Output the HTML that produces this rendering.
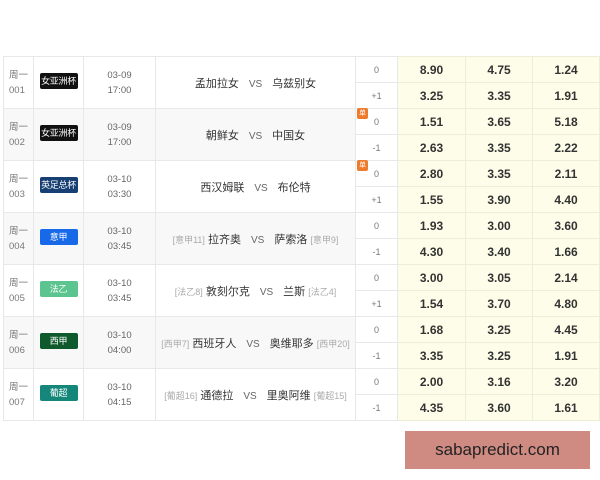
<!DOCTYPE html>
<html><head><meta charset="utf-8"><style>
body{margin:0;width:600px;height:480px;background:#fff;font-family:"Liberation Sans","Noto Sans CJK SC",sans-serif;position:relative;overflow:hidden}
table{position:absolute;left:3px;top:56px;border-collapse:collapse;width:596px;table-layout:fixed}
td{border:1px solid #e6e9ec;padding:0;text-align:center;font-size:10px;color:#666;height:25px}
tr.g td.m{background:#f8f8f8}
td.o{background:#fdfde9;font-weight:bold;color:#333;font-size:12px;border-color:#eceed8}
td.h{color:#777;font-size:9px;position:relative}
.wk{font-size:9.5px;color:#777;line-height:15px;text-align:left;padding-left:5px}
.lg{display:inline-block;width:38px;height:16px;line-height:16px;border-radius:2px;color:#fff;font-size:9px;white-space:nowrap;overflow:hidden;letter-spacing:-0.3px}
.dt{line-height:15px;color:#666;font-size:9.5px}
.tm{font-size:11px;color:#333;white-space:nowrap}
.tm .vs{color:#666;font-size:10px;margin:0 10px}
.tm .r{color:#aaa;font-size:9px}
.dan{position:absolute;left:1px;top:-1px;width:11px;height:11px;background:#ee7a2c;border-radius:2px;color:#fff;font-size:7px;line-height:11px}
#wm{position:absolute;left:405px;top:431px;width:185px;height:38px;background:#cf8b82;color:#222;font-size:17px;line-height:38px;text-align:center}
</style></head><body>
<table>
<colgroup><col style="width:30px"><col style="width:50px"><col style="width:72px"><col style="width:200px"><col style="width:42px"><col style="width:68px"><col style="width:67px"><col style="width:67px"></colgroup>
<tr><td class="m wk" rowspan="2">周一<br>001</td><td class="m" rowspan="2"><span class="lg" style="background:#111">女亚洲杯</span></td><td class="m dt" rowspan="2">03-09<br>17:00</td><td class="m tm" rowspan="2">孟加拉女<span class="vs">VS</span>乌兹别女</td><td class="h">0</td><td class="o">8.90</td><td class="o">4.75</td><td class="o">1.24</td></tr>
<tr><td class="h">+1</td><td class="o">3.25</td><td class="o">3.35</td><td class="o">1.91</td></tr>
<tr class="g"><td class="m wk" rowspan="2">周一<br>002</td><td class="m" rowspan="2"><span class="lg" style="background:#111">女亚洲杯</span></td><td class="m dt" rowspan="2">03-09<br>17:00</td><td class="m tm" rowspan="2">朝鲜女<span class="vs">VS</span>中国女</td><td class="h"><span class="dan">单</span>0</td><td class="o">1.51</td><td class="o">3.65</td><td class="o">5.18</td></tr>
<tr><td class="h">-1</td><td class="o">2.63</td><td class="o">3.35</td><td class="o">2.22</td></tr>
<tr><td class="m wk" rowspan="2">周一<br>003</td><td class="m" rowspan="2"><span class="lg" style="background:#173f74">英足总杯</span></td><td class="m dt" rowspan="2">03-10<br>03:30</td><td class="m tm" rowspan="2">西汉姆联<span class="vs">VS</span>布伦特</td><td class="h"><span class="dan">单</span>0</td><td class="o">2.80</td><td class="o">3.35</td><td class="o">2.11</td></tr>
<tr><td class="h">+1</td><td class="o">1.55</td><td class="o">3.90</td><td class="o">4.40</td></tr>
<tr class="g"><td class="m wk" rowspan="2">周一<br>004</td><td class="m" rowspan="2"><span class="lg" style="background:#1769e8">意甲</span></td><td class="m dt" rowspan="2">03-10<br>03:45</td><td class="m tm" rowspan="2"><span class="r">[意甲11]</span> 拉齐奥<span class="vs">VS</span>萨索洛 <span class="r">[意甲9]</span></td><td class="h">0</td><td class="o">1.93</td><td class="o">3.00</td><td class="o">3.60</td></tr>
<tr><td class="h">-1</td><td class="o">4.30</td><td class="o">3.40</td><td class="o">1.66</td></tr>
<tr><td class="m wk" rowspan="2">周一<br>005</td><td class="m" rowspan="2"><span class="lg" style="background:#5cc48e">法乙</span></td><td class="m dt" rowspan="2">03-10<br>03:45</td><td class="m tm" rowspan="2"><span class="r">[法乙8]</span> 敦刻尔克<span class="vs">VS</span>兰斯 <span class="r">[法乙4]</span></td><td class="h">0</td><td class="o">3.00</td><td class="o">3.05</td><td class="o">2.14</td></tr>
<tr><td class="h">+1</td><td class="o">1.54</td><td class="o">3.70</td><td class="o">4.80</td></tr>
<tr class="g"><td class="m wk" rowspan="2">周一<br>006</td><td class="m" rowspan="2"><span class="lg" style="background:#0f5a2c">西甲</span></td><td class="m dt" rowspan="2">03-10<br>04:00</td><td class="m tm" rowspan="2"><span class="r">[西甲7]</span> 西班牙人<span class="vs">VS</span>奥维耶多 <span class="r">[西甲20]</span></td><td class="h">0</td><td class="o">1.68</td><td class="o">3.25</td><td class="o">4.45</td></tr>
<tr><td class="h">-1</td><td class="o">3.35</td><td class="o">3.25</td><td class="o">1.91</td></tr>
<tr><td class="m wk" rowspan="2">周一<br>007</td><td class="m" rowspan="2"><span class="lg" style="background:#14877a">葡超</span></td><td class="m dt" rowspan="2">03-10<br>04:15</td><td class="m tm" rowspan="2"><span class="r">[葡超16]</span> 通德拉<span class="vs">VS</span>里奥阿维 <span class="r">[葡超15]</span></td><td class="h">0</td><td class="o">2.00</td><td class="o">3.16</td><td class="o">3.20</td></tr>
<tr><td class="h">-1</td><td class="o">4.35</td><td class="o">3.60</td><td class="o">1.61</td></tr>
</table>
<div id="wm">sabapredict.com</div>
</body></html>
